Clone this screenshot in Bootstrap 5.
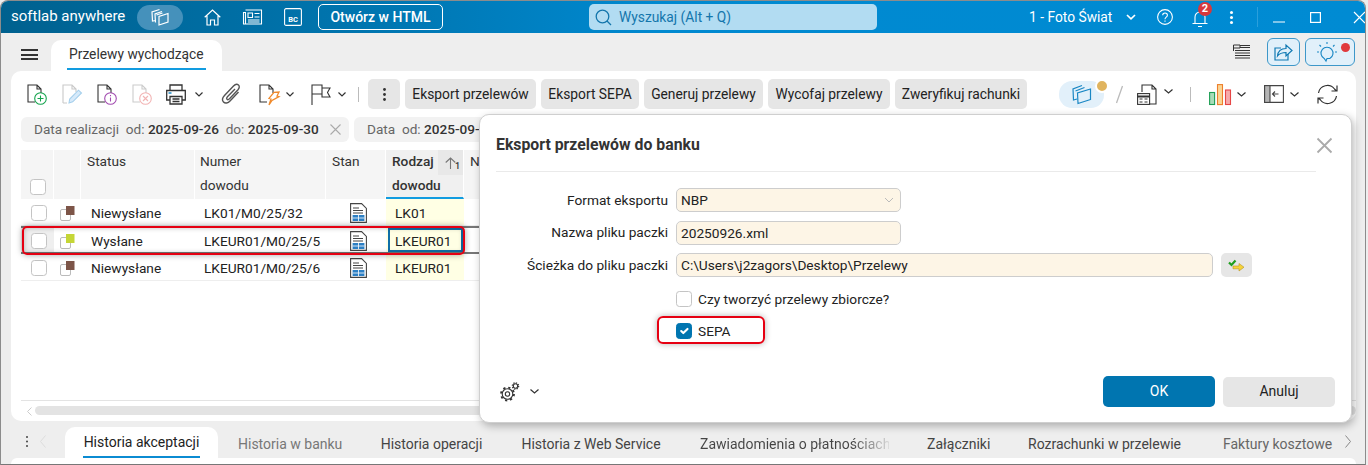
<!DOCTYPE html>
<html lang="pl">
<head>
<meta charset="utf-8">
<title>Przelewy wychodzące</title>
<link href="https://cdn.jsdelivr.net/npm/bootstrap@5.3.0/dist/css/bootstrap.min.css" rel="stylesheet">
<style>
html,body{margin:0;height:465px;overflow:hidden;background:#eee}
body{font-family:Roboto,"Liberation Sans",sans-serif;font-size:13.8px;color:#222}
svg{display:block;flex:none;overflow:visible}
.sl-win{width:1366px;height:465px;border:1px solid #8c8c8c;border-bottom-color:#777;border-radius:8px 8px 0 0;overflow:hidden;background:#eee;position:relative;margin-right:2px}
/* top bar */
.sl-top{height:32px;background:linear-gradient(90deg,#00618f 0,#0078b4 30%,#0089d0 48%,#008bd3 100%);color:#fff;padding-left:10px}
.sl-brand{font-size:15px;width:126px;white-space:nowrap;margin-top:-2px}
.sl-pill{width:46px;height:25px;border-radius:13px;background:#4591bb;display:flex;align-items:center;justify-content:center}
.sl-home{margin-left:21px}.sl-news{margin-left:21px}.sl-bc{margin-left:22px}
.sl-html{margin-left:16px;width:125px;height:26px;border:1px solid #fff;border-radius:5px;color:#fff;font-weight:500;font-size:14px;padding:0;line-height:24px}
.sl-html:hover{color:#fff}
.sl-search{margin-left:146px;width:288px;height:26px;border-radius:5px;background:#b2dcf2;color:#1476ac;display:flex;align-items:center;padding-left:6px;gap:7px;font-size:13.8px}
.sl-firm{margin-left:152px;font-size:13.8px;width:83px;white-space:nowrap}
.sl-badge{position:absolute;left:1197px;top:1px;width:14px;height:14px;border-radius:50%;background:#d8383c;color:#fff;font-size:11px;font-weight:700;line-height:14px;text-align:center}
/* second bar */
.sl-sub{height:38px;padding-left:20px}
.sl-burger{width:17px;height:11px;border-top:2px solid #333;border-bottom:2px solid #333;position:relative;margin-top:5px}
.sl-burger::after{content:"";position:absolute;left:0;right:0;top:2.5px;height:2px;background:#333}
.sl-tab{margin-left:13px;width:171px;height:31px;background:#fff;border-radius:10px 10px 0 0;padding:6px 16px 0 16px;align-self:flex-end;font-size:13.8px;white-space:nowrap}
.sl-tab span{display:block;padding:0 2px 6px;border-bottom:2px solid #129ce0;line-height:16px;color:#333}
.sl-ibtn{width:33px;height:28px;border:1px solid #3d97c9;background:#e1f0fa;border-radius:6px;display:flex;align-items:center;justify-content:center;position:relative}
/* main */
.sl-main{margin:0 9px 0 10px;height:350px;background:#fff;border-radius:10px;position:relative;overflow:hidden;padding:0 10px}
.sl-tools{height:46px}
.sl-btn{height:30px;background:#e6e6e6;border:0;border-radius:5px;padding:0;font-size:13.8px;color:#222;white-space:nowrap;text-align:center}
.sl-btn:hover{background:#e6e6e6;color:#222}
.sl-vr{width:1px;height:15px;background:#bbb}
.sl-chips{height:25px;gap:5px}
.sl-chip{height:25px;border-radius:6px;background:#f2f2f2;padding:0 8px 0 13px;color:#666;white-space:nowrap;flex:none;font-size:13.6px}
.sl-chip b{font-weight:500;color:#333}
/* grid */
.sl-tbl{margin:8px 0 0;table-layout:fixed;width:1326px;border-collapse:separate;border-spacing:0;font-size:13.7px}
.sl-tbl th{background:#f5f5f5;font-weight:400;height:49px;padding:0 0 0 6px;border-right:1px solid #fff;vertical-align:top;line-height:24px;color:#333;position:relative}
.sl-tbl th.sl-nm{padding-left:5px}
.sl-thtxt{display:block;margin-top:-1px}
.sl-tbl td{height:27px;padding:2px 0 0 10px;vertical-align:middle;border-bottom:1px solid #eee;white-space:nowrap}
.sl-tbl td.sl-nmv{padding-left:9px}
.sl-tbl td.sl-st{padding-left:24px}
.sl-tbl td.sl-yel{background:#ffffe4;padding-left:9px}
.sl-tbl th.sl-sort{background:#f0f0f0;font-weight:500;border-bottom:2px solid #129ce0}
.sl-sel td{border-bottom:2px solid #777;border-top:2px solid #777;height:28px}
.sl-cellbox{position:absolute;left:377px;top:157px;width:75px;height:24px;border:2px solid #0f6fa8}
.sl-sorti{position:absolute;right:0;top:0;width:25px;height:25px;background:#e8e8e8;display:flex;align-items:center;justify-content:center}
.sl-sorti small{position:absolute;right:3px;top:11px;font-size:9px;line-height:10px}
.sl-chk{width:16px;height:16px;margin:0;border:1px solid #c4c4c4;border-radius:3px;background-color:#fff;float:none;display:block}
.sl-hb{position:absolute;left:22px;top:155px;width:443px;height:29px;border:2px solid #e60012;border-radius:5px;box-shadow:0 0 6px rgba(0,0,0,.35),inset 0 0 5px rgba(0,0,0,.25);pointer-events:none;margin-left:-11px}
.sl-scroll{position:absolute;left:10px;right:0;top:329px;height:21px;border-top:1px solid #e3e3e3;padding:5px 0 0 6px;display:flex;align-items:flex-start;gap:3px}
.sl-track{flex:1;height:9px;border-radius:5px;background:#e3e3e3}
/* bottom */
.sl-bot{height:37px;padding:6px 0 0 25px;position:relative;font-size:14px}
.sl-btab{color:#444;white-space:nowrap;text-align:center;font-size:14px;padding-top:7px;flex:none}
.sl-btab.sl-on{width:153px;height:31px;background:#fff;border-radius:10px 10px 0 0;color:#222;padding:7px 18px 0}
.sl-btab.sl-on span{display:block;height:24px;border-bottom:2px solid #0b8bd2;line-height:16px}
.sl-fade{color:transparent;background:linear-gradient(90deg,#444 80%,#ddd 100%);-webkit-background-clip:text;background-clip:text}
.sl-strip{height:6px;background:#fff;margin:0 9px 0 10px;border-radius:8px 8px 0 0}
/* dialog */
.sl-dlg{position:absolute;left:478px;top:113px;width:873px;height:309px;background:#fff;border:1px solid #cfcfcf;border-radius:10px;box-shadow:2px 3px 8px rgba(0,0,0,.28);padding:0 17px 0 16px}
.sl-dh{height:57px;border-bottom:1px solid #eaeaea;margin-right:18px;display:flex;align-items:center;padding-top:3px;font-size:15.8px;font-weight:700;color:#333}
.sl-close{position:absolute;left:837px;top:23px;padding:0;border:0;background:none}
.sl-form{padding-top:16px;font-size:13.7px}
.sl-fr{display:flex;align-items:center;height:24px;margin-bottom:8.5px}
.sl-lab{width:172px;text-align:right;margin-right:8px;color:#222;white-space:nowrap}
.sl-inp{width:225px;height:24px;min-height:0;padding:0 4px;font-size:13.7px;border:1px solid #cdcdcd;background-color:#fdf5e6;border-radius:5px;color:#222;box-shadow:none}
.sl-sel-in{--bs-form-select-bg-img:url("data:image/svg+xml,%3csvg xmlns='http://www.w3.org/2000/svg' viewBox='0 0 10 6'%3e%3cpath fill='none' stroke='%23bbb' d='m1 1 4 4 4-4'/%3e%3c/svg%3e");background-position:right 6px center;background-size:10px 6px}
.sl-w537{width:537px}
.sl-pick{width:31px;height:24px;background:#e6e6e6;border:0;border-radius:5px;margin-left:8px;padding:0;display:flex;align-items:center;justify-content:center}
.sl-cr{display:flex;align-items:center;gap:6px;padding-left:180px;height:16px;margin-top:14px;margin-bottom:0}
.sl-cr+.sl-cr{margin-top:16px}
.sl-cr .sl-chk:checked{background-color:#0075b0;border-color:#0075b0}
.sl-red{position:absolute;left:177px;top:201px;width:108px;height:28px;border:2px solid #e60012;border-radius:6px;box-shadow:0 0 6px rgba(0,0,0,.3);pointer-events:none}
.sl-df{position:absolute;left:20px;right:16px;top:261px;display:flex;align-items:center}
.sl-ok{width:112px;height:31px;background:#0075b0;color:#fff;border:0;border-radius:5px;font-size:14px;padding:0}
.sl-no{width:112px;height:30px;background:#e6e6e6;color:#222;border:0;border-radius:5px;font-size:14px;padding:0;margin-left:8px}
</style>
</head>
<body>
<div class="sl-win">
  <div class="sl-top d-flex align-items-center">
    <div class="sl-brand">softlab anywhere</div>
    <div class="sl-pill"><svg width="21" height="21" viewBox="0 0 21 21" fill="none" stroke="#fff" stroke-width="1.2"><path d="M6 13.5 2.5 14 2 5l7.5-2.5M6.5 8l6-2M9 18l9-3V6.5l-9 3Z"/><path d="M5.5 15.5 5 7l7-2.5"/></svg></div>
    <svg class="sl-home" width="17" height="17" viewBox="0 0 17 17" fill="none" stroke="#fff" stroke-width="1.2"><path d="M.7 8.2 8.5 1l7.8 7.2M3 6.8V16h3.5v-5h4v5H14V6.8"/></svg>
    <svg class="sl-news" width="20" height="16" viewBox="0 0 20 16" fill="none" stroke="#fff" stroke-width="1.1"><path d="M3.5 1H19.5V15H1.5V3.5H3.5V15M6 4H10.5V8.5H6ZM12.5 4.5H17.500M12.500 8H17.500M6 11H17.500M6 13H17.500"/></svg>
    <svg class="sl-bc" width="18" height="18" viewBox="0 0 18 18" fill="none" stroke="#fff" stroke-width="1.1"><rect x=".6" y=".6" width="16.800" height="16.800" rx="1.500"/><text x="9" y="14" text-anchor="middle" font-family="Roboto" font-size="7.500" font-weight="700" fill="#fff" stroke="none">BC</text></svg>
    <button type="button" class="btn sl-html">Otwórz w HTML</button>
    <div class="sl-search"><svg width="17" height="17" viewBox="0 0 17 17" fill="none" stroke="#1476ac" stroke-width="1.300"><circle cx="7.500" cy="7.500" r="6.300"/><path d="m12 12 4 4"/></svg><span>Wyszukaj (Alt + Q)</span></div>
    <div class="sl-firm">1 - Foto Świat</div>
    <svg style="margin-left:14px" width="10" height="6" viewBox="0 0 10 6" fill="none" stroke="#fff" stroke-width="1.700"><path d="m1 1 4 3.800L9 1"/></svg>
    <svg style="margin-left:21px" width="16" height="16" viewBox="0 0 16 16" fill="none" stroke="#fff" stroke-width="1.100"><circle cx="8" cy="8" r="7.400"/><path d="M5.700 6.200c0-3 4.700-3 4.700 0 0 2-2.400 1.900-2.400 4M8 11.500v1.300"/></svg>
    <svg style="margin-left:19px;margin-top:3px" width="16" height="18" viewBox="0 0 16 18" fill="none" stroke="#fff" stroke-width="1.100"><path d="M3 13V7a5 5 0 0 1 10 0v6M.5 13.500h15M6 16.500h4"/></svg>
    <span class="sl-badge">2</span>
    <svg style="margin-left:22px" width="3" height="13" viewBox="0 0 3 13" fill="#fff"><circle cx="1.500" cy="1.500" r="1.500"/><circle cx="1.500" cy="6.500" r="1.500"/><circle cx="1.500" cy="11.500" r="1.500"/></svg>
    <div style="margin-left:24px;width:1px;height:20px;background:#2a9fdc"></div>
    <svg style="margin-left:15px;margin-top:10px" width="12" height="2"><path d="M0 1h12" stroke="#fff" stroke-width="1.200"/></svg>
    <svg style="margin-left:25px" width="11" height="11" viewBox="0 0 11 11" fill="none" stroke="#fff" stroke-width="1.200"><rect x=".6" y=".6" width="9.800" height="9.800"/></svg>
    <svg style="margin-left:33px" width="11" height="11" viewBox="0 0 11 11" fill="none" stroke="#fff" stroke-width="1.200"><path d="m0 0 11 11M11 0 0 11"/></svg>
  </div>

  <div class="sl-sub d-flex align-items-center">
    <div class="sl-burger"></div>
    <div class="sl-tab"><span>Przelewy wychodzące</span></div>
    <svg style="margin-left:1010px" width="18" height="16" viewBox="0 0 18 16" fill="none" stroke="#333"><path d="M1.500 1v6M1.500 1H8v3H1.500M8 1.500h10M8 3.500h10" stroke-width="1"/><path d="M3 6.500h15M3 9h15M3 11.500h15M3 14h15" stroke-width="1.200"/></svg>
    <div class="sl-ibtn" style="margin-left:17px"><svg width="19" height="18" viewBox="0 0 19 18" fill="none" stroke="#0f79b3" stroke-width="1.200"><path d="M14 11v6H1V5h6"/><path d="M3.500 13c.5-5 4-7.500 8.500-7.500V2l6 5.500-6 5.500V9.500c-4 0-6.500 1-8.500 3.500Z"/></svg></div>
    <div class="sl-ibtn" style="margin-left:5px;width:50px"><svg style="margin-left:-6px" width="20" height="20" viewBox="0 0 20 20" fill="none" stroke="#1a87c4" stroke-width="1.100"><path d="M12.800 16.500a6 6 0 1 0-5.600 0L9 19l1-2.500h1Z"/><path d="M10 0v2M2.500 3l1.500 1.500M17.500 3 16 4.500M0 10h2M18 10h2"/></svg><span style="position:absolute;right:4px;top:4px;width:9px;height:9px;border-radius:50%;background:#e03a3c"></span></div>
  </div>

  <div class="sl-main">
    <div class="sl-tools d-flex align-items-center">
      <div class="d-flex align-items-center" style="width:347px;height:30px;padding-left:6px">
        <svg width="20" height="21" viewBox="0 0 20 21" fill="none" stroke="#333" stroke-width="1.100" style="margin-right:15px"><path d="M8 18H1V1h9l4 4v4M10 1v4h4"/><circle cx="13.500" cy="14.500" r="5.800" stroke="#14a44d"/><path d="M13.500 11.500v6M10.500 14.500h6" stroke="#14a44d"/></svg>
        <svg width="20" height="21" viewBox="0 0 20 21" fill="none" stroke="#c9c9c9" stroke-width="1.100" style="margin-right:15px"><path d="M1 19V1h9l4 4v3M10 1v4h4M1 19h4"/><path d="m7 19 .7-4L16.500 6.200l3 2.800-8.800 8.800Z" stroke="#a5cfec" fill="#d7eafa"/></svg>
        <svg width="20" height="21" viewBox="0 0 20 21" fill="none" stroke="#333" stroke-width="1.100" style="margin-right:15px"><path d="M8 18H1V1h9l4 4v4M10 1v4h4"/><circle cx="13.500" cy="14.500" r="5.800" stroke="#a24bb0"/><path d="M13.500 13.500v4M13.500 11v1.300" stroke="#a24bb0"/></svg>
        <svg width="20" height="21" viewBox="0 0 20 21" fill="none" stroke="#ccc" stroke-width="1.100" style="margin-right:14px"><path d="M8 18H1V1h9l4 4v4M10 1v4h4"/><circle cx="13.500" cy="14.500" r="5.800" stroke="#f2b4b4"/><path d="m11 12 5 5M16 12l-5 5" stroke="#f2b4b4"/></svg>
        <svg width="20" height="21" viewBox="0 0 20 21" fill="none" stroke="#333" stroke-width="1.300"><path d="M4 6V1h12v5M4 16H.7V6.500h18.600V16H16M4 12.500h12V20H4ZM6.500 15h7M6.500 17.500h7"/><path d="M2.500 9h3" stroke="#1a87c4"/></svg>
        <svg style="margin-left:9px;margin-right:19px" width="8" height="5" viewBox="0 0 8 5" fill="none" stroke="#333" stroke-width="1.200"><path d="m.5.500 3.500 3.500L7.500.500"/></svg>
        <svg width="19" height="22" viewBox="0 0 19 22" fill="none" stroke="#555" stroke-width="1.400" style="margin-right:18px"><path d="M16.500 9 8 18c-2 2.300-5 2.600-6.500 1s-1-4.300 1-6.500L11.500 3c1.700-1.800 3.800-2 5-1s1 3-.5 4.700L7.500 15.800c-1 1-2 1-2.500.5s-.5-1.500.4-2.500L13 6"/></svg>
        <svg width="20" height="21" viewBox="0 0 20 21" fill="none" stroke="#333" stroke-width="1.100"><path d="M8 18H1V1h9l4 4v4M10 1v4h4"/><path d="M10 21l2-6-2-.6 5-6 5-.4-2 4 2 .6-7 3.800Z" fill="none" stroke="#f08a2c" stroke-width="1.300"/></svg>
        <svg style="margin-left:7px;margin-right:17px" width="8" height="5" viewBox="0 0 8 5" fill="none" stroke="#333" stroke-width="1.200"><path d="m.5.500 3.500 3.500L7.500.500"/></svg>
        <svg width="20" height="21" viewBox="0 0 20 21" fill="none" stroke="#333" stroke-width="1.100"><path d="M1 21V1h10v3h8l-2.500 4.500L19 13h-8v-3H1M11 1v9"/></svg>
        <svg style="margin-left:7px;margin-right:12px" width="8" height="5" viewBox="0 0 8 5" fill="none" stroke="#333" stroke-width="1.200"><path d="m.5.500 3.500 3.500L7.500.500"/></svg>
        <div class="sl-vr"></div>
      </div>
      <button type="button" class="btn sl-btn d-flex align-items-center justify-content-center" style="width:32px;margin-right:5px"><svg width="3" height="13" viewBox="0 0 3 13" fill="#333"><circle cx="1.500" cy="1.500" r="1.400"/><circle cx="1.500" cy="6.500" r="1.400"/><circle cx="1.500" cy="11.500" r="1.400"/></svg></button>
      <button type="button" class="btn sl-btn" style="width:131px;margin-right:5px">Eksport przelewów</button>
      <button type="button" class="btn sl-btn" style="width:98px;margin-right:5px">Eksport SEPA</button>
      <button type="button" class="btn sl-btn" style="width:119px;margin-right:5px">Generuj przelewy</button>
      <button type="button" class="btn sl-btn" style="width:122px;margin-right:5px">Wycofaj przelewy</button>
      <button type="button" class="btn sl-btn" style="width:132px">Zweryfikuj rachunki</button>
      <div class="position-relative d-flex align-items-center justify-content-center" style="margin-left:32px;width:45px;height:27px;background:#e2f0fa;border-radius:13px">
        <svg width="20" height="20" viewBox="0 0 20 20" fill="none" stroke="#1a87c4" stroke-width="1.200"><path d="M5 15 1.500 16 1 5l9-3.500M18.500 15.500 6 19.500l-.5-10.500 13-4Z"/><path d="M3.500 7 12.500 3.500"/></svg>
        <span class="position-absolute" style="right:-5px;top:-2px;width:14px;height:14px;border-radius:50%;background:#e0b45f;border:2px solid #fff"></span>
      </div>
      <svg style="margin-left:12px" width="7" height="17" viewBox="0 0 7 17" stroke="#bbb" stroke-width="1.300"><path d="M6.500 0 .5 17"/></svg>
      <svg style="margin-left:14px" width="20" height="21" viewBox="0 0 20 21" fill="none" stroke="#333" stroke-width="1.100"><path d="M5 8V1h10l4 4v15h-8M15 1v4h4"/><rect x=".6" y="9.600" width="12" height="10.800" fill="#fff"/><path d="M.6 12.500h12" stroke-width="2"/><path d="M2.500 15h3M7.500 15h3M2.500 18h3M7.500 18h3"/></svg>
      <svg style="margin-left:7px;margin-bottom:6px" width="9" height="5" viewBox="0 0 9 5" fill="none" stroke="#333" stroke-width="1.200"><path d="m.5.500 4 3.500 4-3.500"/></svg>
      <div class="sl-vr" style="margin-left:17px"></div>
      <svg style="margin-left:18px" width="22" height="21" viewBox="0 0 22 21" stroke-width="1.100"><rect x=".6" y="8.500" width="5" height="12" fill="#a8dcb9" stroke="#1e9e55"/><rect x="8.500" y=".6" width="5" height="20" fill="#f9d595" stroke="#ee7f2b"/><rect x="16.500" y="6" width="5" height="14.500" fill="#f6aaaa" stroke="#e64646"/></svg>
      <svg style="margin-left:6px" width="9" height="5" viewBox="0 0 9 5" fill="none" stroke="#333" stroke-width="1.200"><path d="m.5.500 4 3.500 4-3.500"/></svg>
      <svg style="margin-left:18px" width="20" height="18" viewBox="0 0 20 18" fill="none" stroke="#444" stroke-width="1.100"><path d="M.6.600h18.800v16.800H.6Z"/><rect x=".6" y=".6" width="5.400" height="16.800" fill="#b5b5b5"/><path d="M14.500 9h-6M11 6.500 8.500 9l2.500 2.500"/></svg>
      <svg style="margin-left:6px" width="9" height="5" viewBox="0 0 9 5" fill="none" stroke="#333" stroke-width="1.200"><path d="m.5.500 4 3.500 4-3.500"/></svg>
      <svg style="margin-left:18px" width="21" height="21" viewBox="0 0 21 21" fill="none" stroke="#333" stroke-width="1.200"><path d="M1.500 9A9 9 0 0 1 17.500 5l2 2M20 1.500V7h-5.500M19.500 12A9 9 0 0 1 3.500 16l-2-2M1 19.500V14h5.500"/></svg>
    </div>

    <div class="sl-chips d-flex">
      <div class="sl-chip d-flex align-items-center" style="width:328px">Data realizacji&nbsp; od:&nbsp;<b>2025-09-26</b>&nbsp; do:&nbsp;<b>2025-09-30</b>
        <svg class="ms-auto" width="11" height="11" viewBox="0 0 11 11" stroke="#aaa" stroke-width="1.100"><path d="m.5.500 10 10M10.500.500l-10 10"/></svg></div>
      <div class="sl-chip d-flex align-items-center" style="width:300px">Data&nbsp; od:&nbsp;<b>2025-09-26</b></div>
    </div>

    <table class="sl-tbl">
      <colgroup><col style="width:33px"><col style="width:27px"><col style="width:114px"><col style="width:131px"><col style="width:60px"><col style="width:78px"><col></colgroup>
      <thead><tr>
        <th style="vertical-align:bottom;padding-left:9px;padding-bottom:4px"><input class="form-check-input sl-chk" type="checkbox" aria-label="Zaznacz"></th>
        <th></th>
        <th><span class="sl-thtxt">Status</span></th>
        <th class="sl-nm"><span class="sl-thtxt">Numer<br>dowodu</span></th>
        <th><span class="sl-thtxt">Stan</span></th>
        <th class="sl-sort"><span class="sl-thtxt">Rodzaj<br>dowodu</span><span class="sl-sorti"><svg width="11" height="12" viewBox="0 0 11 12" fill="none" stroke="#777" stroke-width="1.100"><path d="M5.500 12V1M.7 5.500 5.500 1l4.800 4.500"/></svg><small>1</small></span></th>
        <th><span class="sl-thtxt">N</span></th>
      </tr></thead>
      <tbody>
        <tr>
          <td><input class="form-check-input sl-chk" type="checkbox" aria-label="Wiersz 1"></td>
          <td style="padding-left:6px"><svg width="15" height="16" viewBox="0 0 15 16"><rect x=".5" y="4.500" width="10" height="11" rx="1.500" fill="#fff" stroke="#bbb"/><rect x="6" y="1" width="8.500" height="9" fill="#7d5548"/></svg></td>
          <td>Niewysłane</td><td class="sl-nmv">LK01/M0/25/32</td>
          <td class="sl-st"><svg width="17" height="20" viewBox="0 0 17 20" fill="none" stroke="#444" stroke-width="1.100"><path d="M.6.600h11l4.800 4.800v14H.6Z"/><path d="M3 5h6M3 7.500h10M3 10h10"/><rect x="2.600" y="12" width="11.800" height="6" fill="#2c7fc4" stroke="none"/><path d="M8.500 12v6M2.600 15h11.800" stroke="#fff" stroke-width=".8"/></svg></td>
          <td class="sl-yel">LK01</td><td></td>
        </tr>
        <tr class="sl-sel">
          <td style="background:#efefef"><input class="form-check-input sl-chk" type="checkbox" aria-label="Wiersz 2"></td>
          <td style="padding-left:6px"><svg width="15" height="16" viewBox="0 0 15 16"><rect x=".5" y="4.500" width="10" height="11" rx="1.500" fill="#fff" stroke="#bbb"/><rect x="6" y="1" width="8.500" height="9" fill="#c5d636"/></svg></td>
          <td>Wysłane</td><td class="sl-nmv">LKEUR01/M0/25/5</td>
          <td class="sl-st"><svg width="17" height="20" viewBox="0 0 17 20" fill="none" stroke="#444" stroke-width="1.100"><path d="M.6.600h11l4.800 4.800v14H.6Z"/><path d="M3 5h6M3 7.500h10M3 10h10"/><rect x="2.600" y="12" width="11.800" height="6" fill="#2c7fc4" stroke="none"/><path d="M8.500 12v6M2.600 15h11.800" stroke="#fff" stroke-width=".8"/></svg></td>
          <td class="sl-yel">LKEUR01</td><td></td>
        </tr>
        <tr>
          <td><input class="form-check-input sl-chk" type="checkbox" aria-label="Wiersz 3"></td>
          <td style="padding-left:6px"><svg width="15" height="16" viewBox="0 0 15 16"><rect x=".5" y="4.500" width="10" height="11" rx="1.500" fill="#fff" stroke="#bbb"/><rect x="6" y="1" width="8.500" height="9" fill="#7d5548"/></svg></td>
          <td>Niewysłane</td><td class="sl-nmv">LKEUR01/M0/25/6</td>
          <td class="sl-st"><svg width="17" height="20" viewBox="0 0 17 20" fill="none" stroke="#444" stroke-width="1.100"><path d="M.6.600h11l4.800 4.800v14H.6Z"/><path d="M3 5h6M3 7.500h10M3 10h10"/><rect x="2.600" y="12" width="11.800" height="6" fill="#2c7fc4" stroke="none"/><path d="M8.500 12v6M2.600 15h11.800" stroke="#fff" stroke-width=".8"/></svg></td>
          <td class="sl-yel">LKEUR01</td><td></td>
        </tr>
      </tbody>
    </table>
    <div class="sl-cellbox"></div>
    <div class="sl-hb"></div>
    <div class="sl-scroll"><svg style="margin-top:1px" width="5" height="9" viewBox="0 0 5 9" fill="none" stroke="#ccc"><path d="M4.500.500.500 4.500l4 4"/></svg><div class="sl-track"></div></div>
  </div>

  <div class="sl-bot d-flex align-items-start">
    <svg style="margin-top:9px;margin-right:12px" width="2" height="11" viewBox="0 0 2 11" fill="#444"><circle cx="1" cy="1" r="1"/><circle cx="1" cy="5.500" r="1"/><circle cx="1" cy="10" r="1"/></svg>
    <svg style="margin-top:8px;margin-right:19px" width="6" height="13" viewBox="0 0 6 13" fill="none" stroke="#ddd"><path d="M5.500.500.500 6.500l5 6"/></svg>
    <div class="sl-btab sl-on"><span>Historia akceptacji</span></div>
    <div class="sl-btab" style="margin-left:20px;width:103px;color:#777">Historia w banku</div>
    <div class="sl-btab" style="margin-left:39px;width:103px">Historia operacji</div>
    <div class="sl-btab" style="margin-left:38px;width:140px">Historia z Web Service</div>
    <div class="sl-btab" style="margin-left:39px;width:189px;overflow:hidden"><span class="sl-fade">Zawiadomienia o płatnościach</span></div>
    <div class="sl-btab" style="margin-left:38px;width:62px">Załączniki</div>
    <div class="sl-btab" style="margin-left:39px;width:153px">Rozrachunki w przelewie</div>
    <div class="sl-btab" style="margin-left:42px;width:108px;color:#666">Faktury kosztowe</div>
    <svg style="margin-left:14px;margin-top:8px" width="6" height="13" viewBox="0 0 6 13" fill="none" stroke="#888"><path d="m.5.500 5 6-5 6"/></svg>
  </div>
  <div class="sl-strip"></div>

  <div class="sl-dlg">
    <div class="sl-dh">Eksport przelewów do banku</div>
    <button type="button" class="sl-close" aria-label="Zamknij"><svg width="15" height="15" viewBox="0 0 15 15" stroke="#aaa" stroke-width="1.800"><path d="m.5.500 14 14M14.500.500l-14 14"/></svg></button>
    <div class="sl-form">
      <div class="sl-fr"><label class="sl-lab">Format eksportu</label><select class="form-select sl-inp sl-sel-in"><option>NBP</option></select></div>
      <div class="sl-fr"><label class="sl-lab">Nazwa pliku paczki</label><input class="form-control sl-inp" value="20250926.xml"></div>
      <div class="sl-fr"><label class="sl-lab">Ścieżka do pliku paczki</label><input class="form-control sl-inp sl-w537" value="C:\Users\j2zagors\Desktop\Przelewy"><button type="button" class="btn sl-pick" aria-label="Wybierz"><svg width="17" height="13" viewBox="0 0 17 13"><path d="M1 3.500 3.500 6l4-4.500" fill="none" stroke="#1e9e1e" stroke-width="2.200"/><path d="M5 7h6V4.500l5 3.700-5 3.800V9.800H5Z" fill="#f5d33a" stroke="#b9961c" stroke-width=".6"/></svg></button></div>
      <label class="sl-cr"><input class="form-check-input sl-chk" type="checkbox"><span>Czy tworzyć przelewy zbiorcze?</span></label>
      <label class="sl-cr"><input class="form-check-input sl-chk" type="checkbox" checked><span>SEPA</span></label>
    </div>
    <div class="sl-red"></div>
    <div class="sl-df">
      <svg width="20" height="20" viewBox="0 0 20 20" fill="none" stroke="#333"><circle cx="7.500" cy="12" r="5.300" stroke-width="1.100"/><circle cx="7.500" cy="12" r="6.500" stroke-width="1.800" stroke-dasharray="2.200 2.900"/><circle cx="7.500" cy="12" r="2.200" stroke-width="1.100"/><circle cx="15.500" cy="4" r="2.200" stroke-width="1.100"/><circle cx="15.500" cy="4" r="3.200" stroke-width="1.200" stroke-dasharray="1.300 1.200"/></svg>
      <svg style="margin-left:10px" width="9" height="5" viewBox="0 0 9 5" fill="none" stroke="#333" stroke-width="1.200"><path d="m.5.500 4 3.500 4-3.500"/></svg>
      <button type="button" class="btn sl-ok ms-auto">OK</button>
      <button type="button" class="btn sl-no">Anuluj</button>
    </div>
  </div>
</div>
<script src="https://cdn.jsdelivr.net/npm/bootstrap@5.3.0/dist/js/bootstrap.bundle.min.js"></script>
</body>
</html>
